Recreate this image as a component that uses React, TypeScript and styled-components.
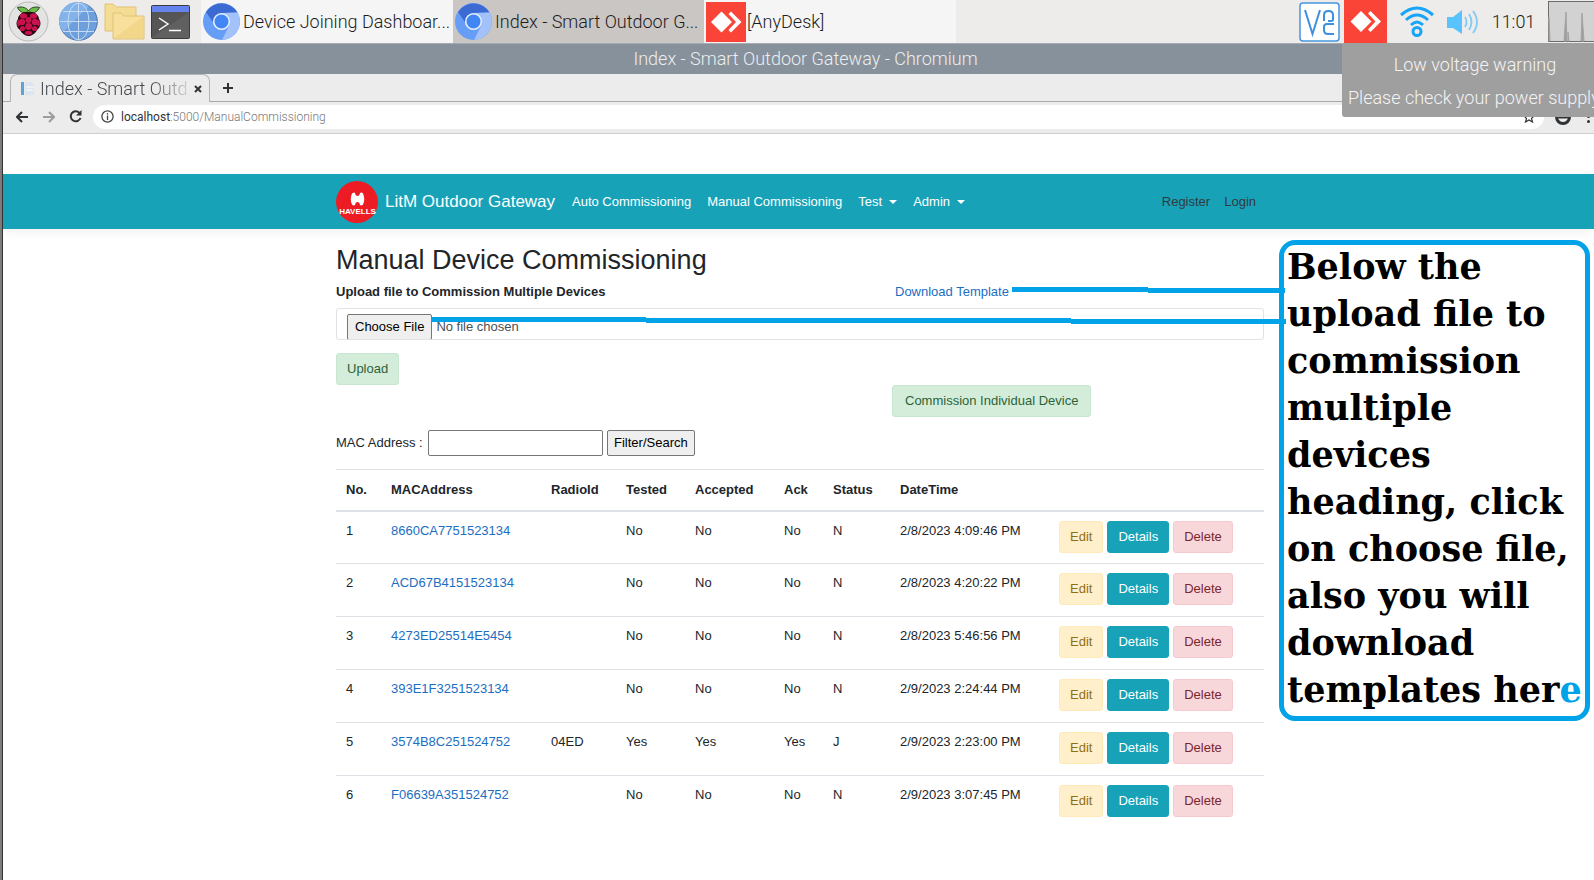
import React from "react";
import styled, { createGlobalStyle, css } from "styled-components";

const GlobalStyle = createGlobalStyle`
  * { box-sizing: border-box; }
  body {
    margin: 0;
    background: #fff;
    color: #212529;
    font: 13px/20px "Liberation Sans", Arial, sans-serif;
    overflow-x: hidden;
  }
  a { text-decoration: none; color: #1b6ec2; }
  svg { display: block; flex: none; }
  button, input { font: inherit; }
`;

const chromeFont = css`
  font-family: Roboto, "Noto Sans", sans-serif;
  font-weight: 300;
`;

const Desktop = styled.div`
  position: relative;
  min-height: 100vh;
  border-left: 2px solid #7c7c7c;
  overflow: hidden;
`;

const Screen = styled.div`
  min-height: 100vh;
  border-left: 1px solid #333;
`;

/* ---------- desktop panel ---------- */

const Panel = styled.header`
  ${chromeFont}
  display: flex;
  align-items: center;
  height: 43px;
  background: #edecea;
  color: #1c1c1c;
  font-size: 18px;
  overflow: hidden;
`;

const Launchers = styled.div`
  display: flex;
  align-items: center;
  gap: 6px;
  width: 198px;
  padding-left: 5px;
`;

const LaunchButton = styled.button`
  padding: 0;
  border: 0;
  background: none;
  &:first-child { margin-right: 4px; }
`;

const TaskButton = styled.button<{ $active?: boolean; $tight?: boolean }>`
  display: flex;
  align-items: center;
  gap: ${(p) => (p.$tight ? 1 : 3)}px;
  width: ${(p) => (p.$active ? 251 : 252)}px;
  height: 43px;
  padding: 0 2px;
  border: 0;
  background: ${(p) => (p.$active ? "#c9c6c4" : "#f5f5f5")};
  color: inherit;
  font-weight: 300;
  white-space: nowrap;
`;

const Tray = styled.div`
  display: flex;
  align-items: center;
  margin-left: auto;
`;

const TrayItem = styled.div<{ $w: number }>`
  display: flex;
  justify-content: center;
  width: ${(p) => p.$w}px;
`;

/* ---------- browser window ---------- */

const TitleBar = styled.div`
  ${chromeFont}
  height: 31px;
  padding-left: 14px;
  border-top: 1px solid #a5abb1;
  background: #87919b;
  color: #eceef0;
  font-size: 18px;
  line-height: 30px;
  text-align: center;
`;

const TabStrip = styled.div`
  display: flex;
  height: 28px;
  padding-left: 7px;
  border-bottom: 1px solid #a9a9ab;
  background: #ececec;
`;

const Tab = styled.div`
  ${chromeFont}
  display: flex;
  align-items: center;
  width: 200px;
  height: 28px;
  padding-left: 10px;
  border: 1px solid #b4b4b6;
  border-bottom: 0;
  border-radius: 7px 7px 0 0;
  background: #ececec;
  color: #45494d;
  font-size: 18px;
`;

const TabTitle = styled.span`
  flex: 1;
  margin-left: 6px;
  white-space: nowrap;
  mask-image: linear-gradient(90deg, #000 75%, transparent 105%);
`;

const GlyphButton = styled.button<{ $w: number }>`
  display: flex;
  align-items: center;
  justify-content: center;
  width: ${(p) => p.$w}px;
  padding: 0;
  border: 0;
  background: none;
`;

const Toolbar = styled.div`
  display: flex;
  align-items: center;
  height: 32px;
  padding: 0 0 2px 5px;
  border-bottom: 1px solid #cfcfcf;
  background: #ececec;
`;

const Omnibox = styled.div`
  display: flex;
  align-items: center;
  flex: 1;
  height: 24px;
  margin-left: 4px;
  padding: 0 8px;
  border-radius: 12px;
  background: #fff;
`;

const Address = styled.a`
  ${chromeFont}
  flex: 1;
  margin-left: 7px;
  color: #777;
  font-size: 12px;
  b { color: #333; font-weight: 400; }
`;

const Notice = styled.div`
  ${chromeFont}
  position: absolute;
  top: 43px;
  right: 0;
  width: 252px;
  height: 74px;
  padding: 5px 0 0 6px;
  border-radius: 3px 0 0 3px;
  background: #9f9f9f;
  color: #f4f4f4;
  font-size: 18px;
  line-height: 33px;
  white-space: nowrap;
  p { width: 254px; margin: 0; }
  p:first-child { text-align: center; }
`;

/* ---------- web page ---------- */

const Container = styled.div`
  position: relative;
  width: 928px;
  margin: 0 auto;
`;

const NavBar = styled.nav`
  margin-top: 40px;
  padding-left: 3px;
  background: #17a2b8;
  box-shadow: 0 3px 11px rgba(0, 0, 0, 0.06);
`;

const NavRow = styled(Container)`
  display: flex;
  align-items: center;
  height: 55px;
`;

const Brand = styled.a`
  display: flex;
  align-items: center;
  gap: 7px;
  width: 236px;
  color: #fff;
  font-size: 17px;
`;

const NavLink = styled.a<{ $dark?: boolean }>`
  display: flex;
  align-items: center;
  gap: 7px;
  margin-right: ${(p) => (p.$dark ? 8 : 16)}px;
  padding-right: ${(p) => (p.$dark ? 6 : 0)}px;
  color: ${(p) => (p.$dark ? "#343a40" : "#fff")};
`;

const Caret = styled.i`
  border: 4px solid transparent;
  border-top-color: currentColor;
  border-bottom: 0;
`;

const Account = styled.div`
  display: flex;
  margin-left: auto;
  margin-right: -6px;
`;

const Main = styled.main`
  padding: 15px 0 0 3px;
`;

const Title = styled.h2`
  margin: 0 0 6px;
  font-size: 27px;
  font-weight: 400;
  line-height: 32px;
`;

const Split = styled.div`
  display: grid;
  grid-template-columns: 559px 1fr;
  label { font-weight: 700; }
`;

const FileInput = styled.input`
  display: block;
  width: 100%;
  height: 32px;
  margin: 6px 0 13px;
  padding: 5px 10px 0;
  border: 1px solid #dfe3e7;
  border-radius: 3px;
  color: #495057;
  &::file-selector-button {
    height: 26px;
    margin: 0 4px 0 0;
    padding: 1px 7px;
    border: 1px solid #767676;
    border-radius: 2px;
    background: #efefef;
    color: #000;
    font: inherit;
  }
`;

const tones = {
  success: { fill: "#d4edda", edge: "#c9e6d1", ink: "#2c6339" },
  warning: { fill: "#fff0cb", edge: "#ffeab8", ink: "#8f6f14" },
  info: { fill: "#17a2b8", edge: "#17a2b8", ink: "#ffffff" },
  danger: { fill: "#f8d7da", edge: "#f5c9ce", ink: "#7a2630" },
};

const Button = styled.button<{ $tone: keyof typeof tones }>`
  height: 32px;
  padding: 0 10px;
  border: 1px solid ${(p) => tones[p.$tone].edge};
  border-radius: 3px;
  background: ${(p) => tones[p.$tone].fill};
  color: ${(p) => tones[p.$tone].ink};
`;

const IndividualRow = styled.div`
  display: flex;
  padding-left: 556px;
  ${Button} { padding: 0 12px; }
`;

const Search = styled.form`
  display: flex;
  align-items: center;
  gap: 4px;
  margin: 13px 0;
  label { width: 88px; }
  input {
    width: 175px;
    height: 26px;
    border: 1px solid #767676;
    border-radius: 2px;
  }
  button {
    height: 26px;
    padding: 0 6px;
    border: 1px solid #767676;
    border-radius: 2px;
    background: #efefef;
    color: #000;
  }
`;

const Table = styled.table`
  width: 100%;
  table-layout: fixed;
  border-collapse: separate;
  border-spacing: 0;
  text-align: left;
  th, td {
    padding: 10px 0 0 10px;
    border-top: 1px solid #dee2e6;
    vertical-align: top;
  }
  th { height: 41px; }
  td { height: 53px; padding-top: 9px; }
  tbody tr:first-child td { border-top-width: 2px; }
`;

const Actions = styled.div`
  display: flex;
  gap: 4px;
`;

/* ---------- callout over the page ---------- */

const Callout = styled.aside`
  position: absolute;
  top: -4px;
  left: calc(100% + 15px);
  width: 311px;
  height: 481px;
  padding-left: 3px;
  border: 5px solid #00a2e8;
  border-radius: 16px;
  color: #000;
  font: 900 35px/47px "DejaVu Serif", serif;
  white-space: nowrap;
  p { position: relative; top: -2px; margin: 0; }
  em { color: #00a2e8; font-style: normal; }
`;

const Leaders = styled.svg`
  position: absolute;
  top: 43px;
  left: 95px;
  pointer-events: none;
`;

const ChromiumIcon = () => (
  <svg width="37" height="37" viewBox="0 0 37 37">
    <circle cx="18.500" cy="18.500" r="18.500" fill="#669df6" />
    <path d="M3 9A18.500 18.500 0 0 1 34.500 9.500L18.500 10Q11 11 10.500 20Z" fill="#3c6ad3" />
    <path d="M34.500 9.500A18.500 18.500 0 0 1 19 37L26.500 22Q28 14 19 10Z" fill="#a3c2f9" />
    <circle cx="18.500" cy="18.500" r="7.800" fill="#4285f4" stroke="#e6effd" strokeWidth="1.600" />
  </svg>
);

const AnyDeskIcon = ({ w = 40, h = 40 }: { w?: number; h?: number }) => (
  <svg width={w} height={h} viewBox={`${20 - w / 2} ${20 - h / 2} ${w} ${h}`}>
    <rect x="-5" y="-5" width="50" height="50" fill="#fb4438" />
    <path d="M15.500 9.500L26 20L15.500 30.500L5 20Z" fill="#fff" />
    <path d="M22.500 12L25 9.500L35.500 20L25 30.500L22.500 28L30 20Z" fill="#fff" />
  </svg>
);

const RaspberryIcon = () => (
  <svg width="41" height="41" viewBox="0 0 41 41">
    <circle cx="20.500" cy="20.500" r="19.500" fill="#e3e3e3" stroke="#b9b9b9" />
    <path d="M20 12C15 13 11 10 9.500 6.500C14 5 19 7 20.500 10C22 7 27 5 31.500 6.500C30 10 26 13 21 12Z" fill="#6cc04a" stroke="#24431c" />
    <path d="M20.500 11C27 10 31 15 31 18C34 22 32 27 29 29C27 33 23 35 20.500 35C18 35 14 33 12 29C9 27 7 22 10 18C10 15 14 10 20.500 11Z" fill="#2a0612" />
    <g fill="#c7124d">
      <ellipse cx="15.500" cy="15" rx="3.600" ry="2.800" />
      <ellipse cx="25.500" cy="15" rx="3.600" ry="2.800" />
      <circle cx="20.500" cy="19" r="3" />
      <circle cx="14" cy="21" r="3.200" />
      <circle cx="27" cy="21" r="3.200" />
      <circle cx="20.500" cy="25.500" r="3.400" />
      <ellipse cx="10.500" cy="22" rx="1.400" ry="3.200" />
      <ellipse cx="30.500" cy="22" rx="1.400" ry="3.200" />
      <circle cx="14.500" cy="27.500" r="2.600" />
      <circle cx="26.500" cy="27.500" r="2.600" />
      <ellipse cx="20.500" cy="31.800" rx="3.600" ry="2" />
    </g>
  </svg>
);

const GlobeIcon = () => (
  <svg width="39" height="39" viewBox="0 0 39 39">
    <circle cx="19.500" cy="19.500" r="18.800" fill="#6c9fdc" stroke="#4e76a8" />
    <path d="M4 30A18.500 18.500 0 0 1 30 4Z" fill="#83b3ea" />
    <g fill="none" stroke="#c5dbf5">
      <ellipse cx="19.500" cy="19.500" rx="10.500" ry="18.500" />
      <path d="M19.500 1V38M1 19.500H38M4 9.500H35M4 29.500H35" />
    </g>
  </svg>
);

const FoldersIcon = () => (
  <svg width="41" height="37" viewBox="0 0 41 37">
    <path d="M1 1H9L12 4H32V28H1Z" fill="#f5dc95" stroke="#dfc277" />
    <path d="M9 10H17L20 13H40V36H9Z" fill="#f8e09c" stroke="#dfc277" />
    <path d="M10 35L39 14V35Z" fill="#f2d68a" />
  </svg>
);

const TerminalIcon = () => (
  <svg width="39" height="34" viewBox="0 0 39 34">
    <rect x=".5" y=".5" width="38" height="33" rx="1" fill="#555" stroke="#3c3c3c" />
    <path d="M1 33L38 7V33Z" fill="#606060" />
    <rect x="1" y="1" width="37" height="6" fill="#6584ee" />
    <path d="M8 13L17 19L8 25M18 25.500H30" fill="none" stroke="#fff" strokeWidth="1.500" />
  </svg>
);

const VncIcon = () => (
  <svg width="41" height="40" viewBox="0 0 41 40">
    <rect x="1" y="1" width="39" height="38" rx="3" fill="#fff" stroke="#4496e0" strokeWidth="1.500" />
    <g fill="none" stroke="#3d8fe0" strokeWidth="2">
      <path d="M6 8L13.500 32L21 8" />
      <path d="M25 19V13Q25 9 29.500 9Q34 9 34 13V17.500Q34 19 32 19H29" />
      <path d="M35 22H28Q25 22 25 25V28Q25 32 29 32H35" />
    </g>
  </svg>
);

const WifiIcon = () => (
  <svg width="34" height="32" viewBox="0 0 34 32" fill="none" stroke="#18a5f8" strokeWidth="3">
    <path d="M1 9Q17-5 33 9M6 14Q17 4 28 14M11 19Q17 13 23 19" />
    <circle cx="17" cy="25.500" r="4" />
  </svg>
);

const SpeakerIcon = () => (
  <svg width="34" height="26" viewBox="0 0 34 26">
    <path d="M1 8H7L16 1V25L7 19H1Z" fill="#58c3ff" />
    <path d="M19 8Q22 13 19 18M23 5Q28 13 23 21M27 2Q35 13 27 24" fill="none" stroke="#7dccf8" strokeWidth="1.800" />
  </svg>
);

const CpuGraph = () => (
  <svg width="46" height="41" viewBox="0 0 46 41">
    <rect x=".5" y=".5" width="50" height="40" fill="#d2d2d2" stroke="#6b6b6b" />
    <path d="M1 40V16L2 40ZM16 40L18 11L19 40ZM20 40V31L21 40ZM33 40L34 12L36 40Z" fill="#9c9c9c" stroke="#a4a4a4" />
  </svg>
);

const Logo = () => (
  <svg width="42" height="42" viewBox="0 0 42 42">
    <circle cx="21" cy="21" r="21" fill="#ed1c24" />
    <path d="M16 12.500Q18 11 19 12Q19.500 15 21.500 15Q23.500 15 24 12Q26 11 27 12.500Q29.500 18 27 23.500Q25.500 25 24 24Q23.500 21 21.500 21Q19.500 21 19 24Q17.500 25 16 23.500Q13.500 18 16 12.500Z" fill="#fff" />
    <text x="21.500" y="33" textAnchor="middle" fill="#fff" fontFamily="Liberation Sans, sans-serif" fontSize="8" fontWeight="700">HAVELLS</text>
  </svg>
);

const PageIcon = () => (
  <svg width="13" height="13" viewBox="0 0 13 13">
    <path d="M4 0H10L13 3V13H4Z" fill="#dce6f2" />
    <path d="M5 5H12M5 8H12" stroke="#fff" />
    <rect width="3" height="13" fill="#58a5d8" />
  </svg>
);

const icon = { fill: "none", stroke: "#303336", strokeWidth: 2 };

const columns: [string, number][] = [
  ["No.", 45],
  ["MACAddress", 160],
  ["RadioId", 75],
  ["Tested", 69],
  ["Accepted", 89],
  ["Ack", 49],
  ["Status", 67],
  ["DateTime", 159],
  ["", 215],
];

const devices = [
  ["8660CA7751523134", "", "No", "No", "No", "N", "2/8/2023 4:09:46 PM"],
  ["ACD67B4151523134", "", "No", "No", "No", "N", "2/8/2023 4:20:22 PM"],
  ["4273ED25514E5454", "", "No", "No", "No", "N", "2/8/2023 5:46:56 PM"],
  ["393E1F3251523134", "", "No", "No", "No", "N", "2/9/2023 2:24:44 PM"],
  ["3574B8C251524752", "04ED", "Yes", "Yes", "Yes", "J", "2/9/2023 2:23:00 PM"],
  ["F06639A351524752", "", "No", "No", "No", "N", "2/9/2023 3:07:45 PM"],
];

const calloutLines = [
  "Below the",
  "upload file to",
  "commission",
  "multiple",
  "devices",
  "heading, click",
  "on choose file,",
  "also you will",
  "download",
];

export default function App() {
  return (
    <Desktop>
      <GlobalStyle />
      <Screen>
        <Panel>
          <Launchers>
            <LaunchButton aria-label="Menu"><RaspberryIcon /></LaunchButton>
            <LaunchButton aria-label="Web browser"><GlobeIcon /></LaunchButton>
            <LaunchButton aria-label="Files"><FoldersIcon /></LaunchButton>
            <LaunchButton aria-label="Terminal"><TerminalIcon /></LaunchButton>
          </Launchers>
          <TaskButton><ChromiumIcon />Device Joining Dashboar...</TaskButton>
          <TaskButton $active><ChromiumIcon />Index - Smart Outdoor G...</TaskButton>
          <TaskButton $tight><AnyDeskIcon />[AnyDesk]</TaskButton>
          <Tray>
            <TrayItem $w={49}><VncIcon /></TrayItem>
            <TrayItem $w={43}><AnyDeskIcon w={43} h={43} /></TrayItem>
            <TrayItem $w={60}><WifiIcon /></TrayItem>
            <TrayItem $w={32}><SpeakerIcon /></TrayItem>
            <TrayItem $w={69}>11:01</TrayItem>
            <CpuGraph />
          </Tray>
        </Panel>

        <TitleBar>Index - Smart Outdoor Gateway - Chromium</TitleBar>
        <TabStrip>
          <Tab>
            <PageIcon />
            <TabTitle>Index - Smart Outd</TabTitle>
            <GlyphButton $w={24} aria-label="Close tab">
              <svg width="8" height="8" viewBox="0 0 8 8" {...icon}><path d="M1 1L7 7M7 1L1 7" /></svg>
            </GlyphButton>
          </Tab>
          <GlyphButton $w={36} aria-label="New tab">
            <svg width="10" height="10" viewBox="0 0 10 10" {...icon}><path d="M5 0V10M0 5H10" /></svg>
          </GlyphButton>
        </TabStrip>
        <Toolbar>
          <GlyphButton $w={27} aria-label="Back">
            <svg width="12" height="12" viewBox="0 0 12 12" {...icon}><path d="M12 6H1M6 1L1 6L6 11" /></svg>
          </GlyphButton>
          <GlyphButton $w={27} aria-label="Forward">
            <svg width="12" height="12" viewBox="0 0 12 12" {...icon} stroke="#9a9c9e"><path d="M0 6H11M6 1L11 6L6 11" /></svg>
          </GlyphButton>
          <GlyphButton $w={27} aria-label="Reload">
            <svg width="13" height="13" viewBox="0 0 13 13" {...icon}>
              <path d="M10.500 3A5 5 0 1 0 11.500 8" />
              <path d="M12.500 0V5.500H7Z" fill="#303336" stroke="none" />
            </svg>
          </GlyphButton>
          <Omnibox>
            <svg width="13" height="13" viewBox="0 0 13 13" fill="none" stroke="#444" strokeWidth="1.300">
              <circle cx="6.500" cy="6.500" r="5.600" />
              <path d="M6.500 5.500V10M6.500 3V4.500" />
            </svg>
            <Address href="#"><b>localhost</b>:5000/ManualCommissioning</Address>
            <GlyphButton $w={14} aria-label="Bookmark">
              <svg width="12" height="12" viewBox="0 0 12 12" {...icon} strokeWidth="1.200">
                <path d="M6 1L7.500 4.500L11 5L8.500 7.500L9.500 11L6 9L2.500 11L3.500 7.500L1 5L4.500 4.500Z" />
              </svg>
            </GlyphButton>
          </Omnibox>
          <GlyphButton $w={38} aria-label="Profile">
            <svg width="16" height="16" viewBox="0 0 16 16">
              <circle cx="8" cy="8" r="8" fill="#303336" />
              <path d="M3 9.500H13Q11 13 8 13Q5 13 3 9.500Z" fill="#ececec" />
            </svg>
          </GlyphButton>
          <GlyphButton $w={12} aria-label="Browser menu">
            <svg width="3" height="13" viewBox="0 0 3 13" fill="#303336">
              <circle cx="1.500" cy="1.500" r="1.500" /><circle cx="1.500" cy="6.500" r="1.500" /><circle cx="1.500" cy="11.500" r="1.500" />
            </svg>
          </GlyphButton>
        </Toolbar>

        <NavBar>
          <NavRow>
            <Brand href="#"><Logo />LitM Outdoor Gateway</Brand>
            <NavLink href="#">Auto Commissioning</NavLink>
            <NavLink href="#">Manual Commissioning</NavLink>
            <NavLink href="#">Test<Caret /></NavLink>
            <NavLink href="#">Admin<Caret /></NavLink>
            <Account>
              <NavLink $dark href="#">Register</NavLink>
              <NavLink $dark href="#">Login</NavLink>
            </Account>
          </NavRow>
        </NavBar>

        <Main>
          <Container>
            <Title>Manual Device Commissioning</Title>
            <Split>
              <label htmlFor="file">Upload file to Commission Multiple Devices</label>
              <span><a href="#">Download Template</a></span>
            </Split>
            <FileInput id="file" type="file" />
            <Button $tone="success">Upload</Button>
            <IndividualRow>
              <Button $tone="success">Commission Individual Device</Button>
            </IndividualRow>
            <Search onSubmit={(e) => e.preventDefault()}>
              <label htmlFor="mac">MAC Address :</label>
              <input id="mac" type="text" />
              <button type="submit">Filter/Search</button>
            </Search>
            <Table>
              <colgroup>
                {columns.map(([name, width]) => <col key={name} width={width} />)}
              </colgroup>
              <thead>
                <tr>{columns.map(([name]) => <th key={name}>{name}</th>)}</tr>
              </thead>
              <tbody>
                {devices.map(([mac, ...rest], i) => (
                  <tr key={mac}>
                    <td>{i + 1}</td>
                    <td><a href="#">{mac}</a></td>
                    {rest.map((value, j) => <td key={j}>{value}</td>)}
                    <td>
                      <Actions>
                        <Button $tone="warning">Edit</Button>
                        <Button $tone="info">Details</Button>
                        <Button $tone="danger">Delete</Button>
                      </Actions>
                    </td>
                  </tr>
                ))}
              </tbody>
            </Table>

            <Callout>
              {calloutLines.map((line) => <p key={line}>{line}</p>)}
              <p>templates her<em>e</em></p>
            </Callout>
            <Leaders width="856" height="38" viewBox="0 0 856 38" fill="none" stroke="#00a2e8" strokeWidth="5">
              <path d="M581 2.500H717M717 3.500H854M0 32.500H215M215 33.500H640M640 34.500H855" />
            </Leaders>
          </Container>
        </Main>
      </Screen>
      <Notice role="status">
        <p>Low voltage warning</p>
        <p>Please check your power supply</p>
      </Notice>
    </Desktop>
  );
}
